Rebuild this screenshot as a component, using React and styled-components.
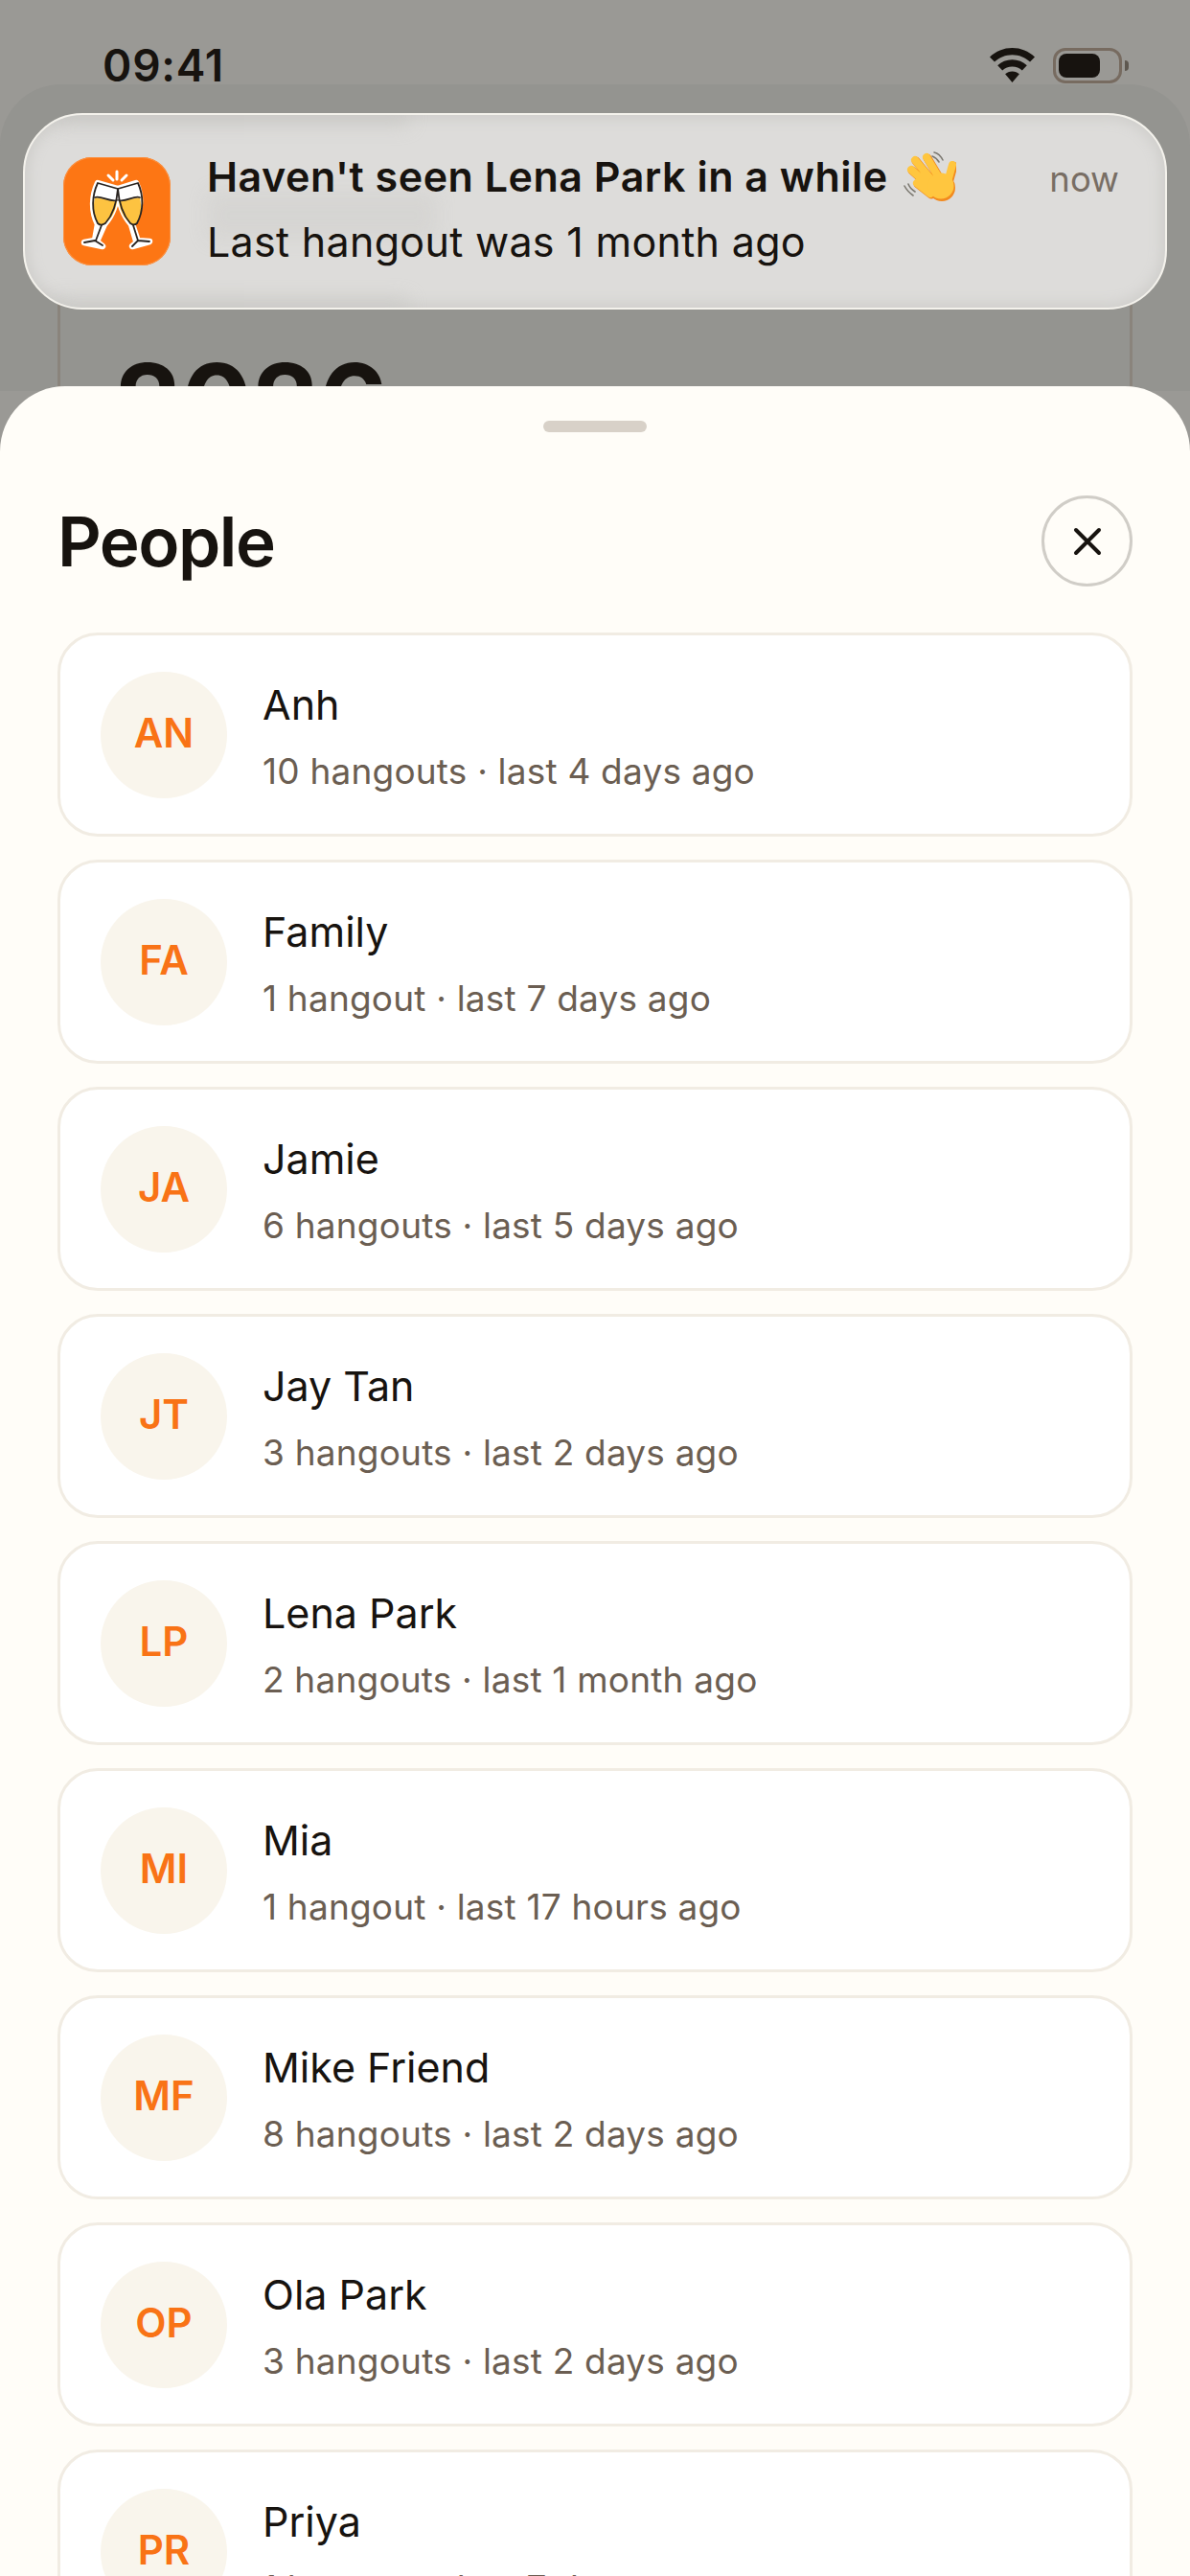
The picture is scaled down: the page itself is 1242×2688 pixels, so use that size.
import styled, { createGlobalStyle } from "styled-components";

const Global = createGlobalStyle`
  html, body { margin: 0; padding: 0; background: #959591; }
  body { font-family: Inter, "Liberation Sans", sans-serif; }
`;

const Screen = styled.div`
  position: relative;
  width: 1242px;
  height: 2688px;
  overflow: hidden;
  background: #9a9995;
`;

const Halo = styled.div`
  position: absolute;
  top: 88px;
  left: 0;
  right: 0;
  height: 320px;
  border-radius: 64px 64px 0 0;
  background: #949490;
`;

const StatusBar = styled.div`
  position: relative;
  display: flex;
  justify-content: space-between;
  align-items: center;
  height: 40px;
  padding: 48px 71px 0 107px;
`;

const Clock = styled.div`
  font-size: 46px;
  line-height: 40px;
  font-weight: 600;
  letter-spacing: 0.8px;
  color: #17130f;
`;

const StatusIcons = styled.div`
  display: flex;
  align-items: center;
  gap: 19px;
`;

const Battery = styled.div`
  position: relative;
  box-sizing: border-box;
  width: 72px;
  height: 37px;
  padding: 3px;
  border: 3px solid #776b60;
  border-radius: 13px;
  &::after {
    content: "";
    position: absolute;
    right: -10px;
    top: 10px;
    width: 4px;
    height: 11px;
    border-radius: 0 6px 6px 0;
    background: #5e5850;
  }
`;

const BatteryFill = styled.div`
  width: 43px;
  height: 100%;
  border-radius: 8px;
  background: #17130f;
`;

const BackCard = styled.div`
  position: relative;
  box-sizing: border-box;
  height: 300px;
  margin: 110px 60px 0;
  padding: 164px 0 0 57px;
  border: 3px solid #8a847c;
  border-radius: 36px;
`;

const BackYear = styled.div`
  font-size: 110px;
  line-height: 108px;
  font-weight: 700;
  color: #17130f;
`;

const Banner = styled.div`
  position: absolute;
  top: 118px;
  left: 24px;
  box-sizing: border-box;
  width: 1194px;
  height: 205px;
  display: flex;
  align-items: center;
  padding: 0 0 0 40px;
  overflow: hidden;
  background: #dddcda;
  border-radius: 62px;
  border: 2px solid #f4f2ec;
  box-shadow: inset 0 0 14px 4px #cfcecb;
`;

const Smudge = styled.div`
  position: absolute;
  top: ${(p) => p.$top}px;
  left: ${(p) => p.$left}px;
  width: ${(p) => p.$width}px;
  height: ${(p) => p.$height}px;
  background: #bdbcb8;
  opacity: ${(p) => p.$opacity};
  filter: blur(10px);
`;

const AppIcon = styled.div`
  position: relative;
  flex: none;
  display: flex;
  width: 112px;
  height: 113px;
  border-radius: 30px;
  background: #fd7614;
  box-shadow: inset 0 0 0 1px #fb9142;
`;

const BannerText = styled.div`
  position: relative;
  flex: 1;
  margin-left: 38px;
  margin-top: -6px;
  color: #17130f;
`;

const BannerTitle = styled.div`
  display: flex;
  align-items: center;
  gap: 16px;
  height: 50px;
  font-size: 43px;
  line-height: 50px;
  font-weight: 600;
  letter-spacing: 0.5px;
`;

const BannerBody = styled.div`
  margin-top: 18px;
  font-size: 43px;
  line-height: 50px;
  font-weight: 400;
  letter-spacing: 0.3px;
`;

const BannerTime = styled.div`
  position: relative;
  flex: none;
  align-self: flex-start;
  margin: 42px 48px 0 0;
  font-size: 36.5px;
  line-height: 50px;
  color: #786e64;
`;

const Sheet = styled.div`
  position: absolute;
  top: 403px;
  left: 0;
  right: 0;
  bottom: 0;
  box-sizing: border-box;
  padding: 36px 60px 0;
  background: #fffdf8;
  border-radius: 68px 68px 0 0;
`;

const Handle = styled.div`
  width: 108px;
  height: 12px;
  margin: 0 auto;
  border-radius: 6px;
  background: #d8d1c8;
`;

const SheetHeader = styled.div`
  display: flex;
  justify-content: space-between;
  align-items: center;
  margin-top: 66px;
  height: 95px;
`;

const SheetTitle = styled.h1`
  margin: 0;
  font-size: 71px;
  line-height: 80px;
  font-weight: 600;
  letter-spacing: -1.5px;
  color: #17130f;
`;

const CloseButton = styled.button`
  box-sizing: border-box;
  display: flex;
  align-items: center;
  justify-content: center;
  width: 95px;
  height: 95px;
  padding: 0;
  background: transparent;
  border: 3px solid #d0cdc7;
  border-radius: 50%;
`;

const List = styled.div`
  display: flex;
  flex-direction: column;
  gap: 24px;
  margin-top: 48px;
`;

const Card = styled.div`
  box-sizing: border-box;
  flex: none;
  display: flex;
  align-items: center;
  gap: 37px;
  height: 213px;
  padding: 0 42px;
  background: #ffffff;
  border: 3px solid #f1ece3;
  border-radius: 42px;
`;

const Avatar = styled.div`
  flex: none;
  display: flex;
  align-items: center;
  justify-content: center;
  box-sizing: border-box;
  width: 132px;
  height: 132px;
  padding-bottom: 4px;
  border-radius: 50%;
  background: #f9f5ec;
  color: #f97316;
  font-size: 42px;
  font-weight: 600;
`;

const Info = styled.div`
  display: flex;
  flex-direction: column;
  gap: 22px;
  margin-top: 4px;
`;

const Name = styled.div`
  font-size: 43px;
  line-height: 50px;
  color: #17130f;
`;

const Stats = styled.div`
  font-size: 37px;
  line-height: 46px;
  letter-spacing: 0.2px;
  color: #6b5e52;
`;

const people = [
  ["AN", "Anh", "10 hangouts · last 4 days ago"],
  ["FA", "Family", "1 hangout · last 7 days ago"],
  ["JA", "Jamie", "6 hangouts · last 5 days ago"],
  ["JT", "Jay Tan", "3 hangouts · last 2 days ago"],
  ["LP", "Lena Park", "2 hangouts · last 1 month ago"],
  ["MI", "Mia", "1 hangout · last 17 hours ago"],
  ["MF", "Mike Friend", "8 hangouts · last 2 days ago"],
  ["OP", "Ola Park", "3 hangouts · last 2 days ago"],
  ["PR", "Priya", "1 hangout · last 7 days ago"],
];

function Wifi() {
  return (
    <svg width="47" height="36" viewBox="0 0 47 36">
      <path fill="#17130f" d="M23.5 0C14.5 0 6.5 3.4 0 9.4l5 5.2C10 10 16.4 7.3 23.5 7.3S37 10 42 14.6l5-5.2C40.5 3.4 32.5 0 23.5 0z" />
      <path fill="#17130f" d="M23.5 12.2c-6 0-11.3 2.2-15.3 6l5 5.2c2.7-2.4 6.3-3.9 10.3-3.9s7.6 1.5 10.3 3.9l5-5.2c-4-3.8-9.3-6-15.3-6z" />
      <path fill="#17130f" d="M23.5 24.5c-3 0-5.6 1.1-7.4 2.8L23.5 36l7.4-8.7c-1.8-1.7-4.4-2.8-7.4-2.8z" />
    </svg>
  );
}

function Cheers() {
  return (
    <svg width="112" height="113" viewBox="0 0 112 113">
      <g stroke="#fff" strokeWidth="6.5" strokeLinecap="round" strokeLinejoin="round" fill="#fff">
        <path d="M36 27L57 33C56 46 52 60 43 70L35 88L41 93L22 89L33 87L36 70C29 56 30 40 36 27z" />
        <path d="M76 27L57 33C58 46 62 60 71 70L76 87L90 88L72 93L78 88L72 70C82 56 82 40 76 27z" />
      </g>
      <path d="M33 42L56 46C55 55 51 64 44 69C41 71 38 71 36 69C31 62 31 52 33 42z" fill="#fdc341" />
      <path d="M80 42L58 46C59 55 63 64 70 69C73 71 75 71 77 69C82 62 82 52 80 42z" fill="#fdc341" />
      <g stroke="#2a2420" strokeWidth="1.8" fill="none" strokeLinecap="round" strokeLinejoin="round">
        <path d="M36 27L57 33C56 46 52 60 44 69C41 71 38 71 36 69C29 56 30 40 36 27z" />
        <path d="M33 42C40 40 48 47 56 45" />
        <path d="M40 71L34 87M22 89L33 87L41 92" />
        <path d="M78 27L57 33C58 46 62 60 70 69C73 71 75 71 77 69C84 56 84 40 78 27z" />
        <path d="M80 42C73 40 66 47 58 45" />
        <path d="M73 71L78 87M72 93L78 87L90 88" />
      </g>
      <g stroke="#fff" strokeWidth="3" strokeLinecap="round">
        <path d="M47 19L52 24M56 15V23M66 19L61 24" />
      </g>
    </svg>
  );
}

function WavingHand() {
  return (
    <svg width="55" height="54" viewBox="0 0 55 54">
      <g fill="none" stroke="#7d7a72" strokeWidth="1.6" strokeLinecap="round">
        <path d="M32 2C36 3 39 6 41 10M30 6C33 7 35 9 37 12M1 37C3 41 6 44 10 47M5 35C6 38 9 41 12 43" />
      </g>
      <g fill="none" stroke="#f28a1e" strokeWidth="9" strokeLinecap="round">
        <path d="M12 10L31 33M24 7L39 32M8 20L28 38M14 34L28 45M51 15L46 33" transform="translate(1 1)" />
      </g>
      <ellipse cx="40" cy="39" rx="14" ry="14" fill="#f28a1e" />
      <g fill="none" stroke="#ffc63f" strokeWidth="8" strokeLinecap="round">
        <path d="M12 10L31 33M24 7L39 32M8 20L28 38M14 34L28 45M51 15L46 33" />
      </g>
      <ellipse cx="39" cy="37" rx="13.5" ry="13.5" fill="#ffc63f" />
    </svg>
  );
}

function CloseIcon() {
  return (
    <svg width="30" height="30" viewBox="0 0 30 30">
      <path d="M3 3L27 27M27 3L3 27" stroke="#17130f" strokeWidth="4" strokeLinecap="round" />
    </svg>
  );
}

export default function App() {
  return (
    <Screen>
      <Global />
      <Halo />
      <StatusBar>
        <Clock>09:41</Clock>
        <StatusIcons>
          <Wifi />
          <Battery>
            <BatteryFill />
          </Battery>
        </StatusIcons>
      </StatusBar>
      <BackCard>
        <BackYear>2026</BackYear>
      </BackCard>
      <Banner>
        <Smudge $top={-6} $left={30} $width={370} $height={16} $opacity={0.5} />
        <Smudge $top={192} $left={30} $width={370} $height={12} $opacity={0.55} />
        <Smudge $top={80} $left={190} $width={240} $height={50} $opacity={0.2} />
        <AppIcon>
          <Cheers />
        </AppIcon>
        <BannerText>
          <BannerTitle>
            Haven't seen Lena Park in a while
            <WavingHand />
          </BannerTitle>
          <BannerBody>Last hangout was 1 month ago</BannerBody>
        </BannerText>
        <BannerTime>now</BannerTime>
      </Banner>
      <Sheet>
        <Handle />
        <SheetHeader>
          <SheetTitle>People</SheetTitle>
          <CloseButton>
            <CloseIcon />
          </CloseButton>
        </SheetHeader>
        <List>
          {people.map(([initials, name, stats]) => (
            <Card key={name}>
              <Avatar>{initials}</Avatar>
              <Info>
                <Name>{name}</Name>
                <Stats>{stats}</Stats>
              </Info>
            </Card>
          ))}
        </List>
      </Sheet>
    </Screen>
  );
}
